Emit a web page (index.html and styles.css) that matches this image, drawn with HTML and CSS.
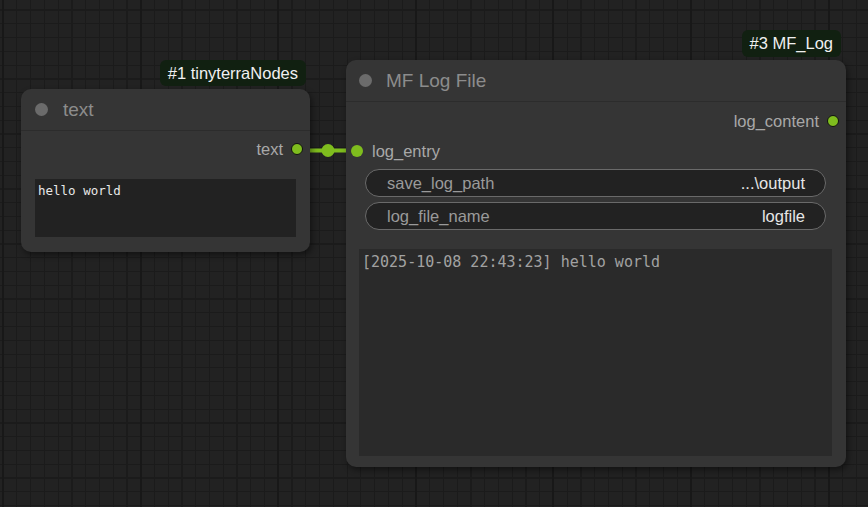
FILE: index.html
```html
<!DOCTYPE html>
<html>
<head>
<meta charset="utf-8">
<link rel="stylesheet" href="styles.css">
</head>
<body>
<div class="canvas">
  <svg class="link" width="70" height="20" viewBox="0 0 70 20">
    <line x1="6" y1="10.5" x2="56" y2="10.5" stroke="#7fbd1e" stroke-width="4"/>
    <circle cx="31" cy="10.5" r="6.5" fill="#7fbd1e"/>
  </svg>

  <div class="node node-text">
    <div class="badge">#1 tinyterraNodes</div>
    <div class="title"><span class="tdot"></span><span class="tname">text</span></div>
    <div class="body">
      <div class="slot out"><span class="slabel">text</span><span class="sdot ring"></span></div>
      <div class="textarea">hello world</div>
    </div>
  </div>

  <div class="node node-log">
    <div class="badge">#3 MF_Log</div>
    <div class="title"><span class="tdot"></span><span class="tname">MF Log File</span></div>
    <div class="body">
      <div class="slot out"><span class="slabel">log_content</span><span class="sdot ring"></span></div>
      <div class="slot in"><span class="sdot"></span><span class="slabel">log_entry</span></div>
      <div class="widgets">
        <div class="widget"><span class="wlabel">save_log_path</span><span class="wvalue">...\output</span></div>
        <div class="widget"><span class="wlabel">log_file_name</span><span class="wvalue">logfile</span></div>
      </div>
      <div class="logbox">[2025-10-08 22:43:23] hello world</div>
    </div>
  </div>
</div>
</body>
</html>
```
FILE: styles.css
```css
html, body {
  margin: 0;
  padding: 0;
}
body {
  width: 868px;
  height: 507px;
  overflow: hidden;
  background: #222222;
  font-family: "Liberation Sans", Arial, sans-serif;
}
.canvas {
  position: relative;
  width: 868px;
  height: 507px;
  background-color: #222222;
  background-image:
    repeating-linear-gradient(to right, transparent 0, transparent 2px, #181818 2px, #181818 4px, transparent 4px, transparent 137.6px),
    repeating-linear-gradient(to right, transparent 0, transparent 2.5px, #1b1b1b 2.5px, #1b1b1b 3.7px, transparent 3.7px, transparent 13.76px),
    repeating-linear-gradient(to bottom, transparent 0, transparent 9.5px, #1b1b1b 9.5px, #1b1b1b 10.7px, transparent 10.7px, transparent 13.76px);
}
.link {
  position: absolute;
  left: 297px;
  top: 140px;
}
.node {
  position: absolute;
  background: #353535;
  border-radius: 10px;
  box-shadow: 2px 3px 6px rgba(0, 0, 0, 0.45);
  display: flex;
  flex-direction: column;
}
.node-text {
  left: 21px;
  top: 89px;
  width: 289px;
  height: 163px;
}
.node-log {
  left: 346px;
  top: 60px;
  width: 500px;
  height: 407px;
}
.badge {
  position: absolute;
  right: 4px;
  bottom: calc(100% + 3px);
  height: 26px;
  line-height: 26px;
  padding: 0 8px;
  background: #112011;
  color: #f0f0f0;
  font-size: 16.5px;
  border-radius: 6px;
  white-space: nowrap;
}
.node-log .badge {
  right: 5px;
  height: 27px;
  line-height: 27px;
}
.title {
  height: 41px;
  border-bottom: 1px solid #2c2c2c;
  display: flex;
  align-items: center;
  padding-left: 14px;
  flex-shrink: 0;
}
.tdot {
  width: 13px;
  height: 13px;
  border-radius: 50%;
  background: #6b6b6b;
  flex-shrink: 0;
}
.tname {
  margin-left: 15px;
  color: #8c8c8c;
  font-size: 19px;
}
.node-log .tdot {
  margin-left: -1px;
}
.node-log .tname {
  margin-left: 14px;
}
.body {
  display: flex;
  flex-direction: column;
  flex: 1;
  padding: 6px 14px 14px 14px;
  min-height: 0;
}
.slot {
  height: 24px;
  display: flex;
  align-items: center;
  font-size: 16.5px;
  color: #a8a8a8;
}
.slot.out {
  justify-content: flex-end;
  margin-right: -7px;
}
.slot.out .slabel {
  margin-right: 8px;
}
.slot.in {
  margin-left: -8px;
  margin-top: 6px;
}
.slot.in .slabel {
  margin-left: 9px;
}
.sdot {
  width: 12px;
  height: 12px;
  border-radius: 50%;
  background: #7fbd1e;
  box-sizing: border-box;
}
.sdot.ring {
  border: 1.5px solid #111;
}
.textarea {
  margin-top: 18px;
  height: 58px;
  background: #222222;
  color: #e8e8e8;
  font-family: "DejaVu Sans Mono", "Liberation Mono", monospace;
  font-size: 12.5px;
  line-height: 16px;
  padding: 4px 3px;
  box-sizing: border-box;
}
.node-log .body {
  padding: 7px 14px 11px 13px;
}
.widgets {
  display: flex;
  flex-direction: column;
  gap: 5px;
  margin: 6px 6px 0 6px;
}
.widget {
  height: 28px;
  box-sizing: border-box;
  border: 1px solid #6a6a6a;
  border-radius: 14px;
  background: #222222;
  display: flex;
  align-items: center;
  justify-content: space-between;
  padding: 0 20px 0 21px;
  font-size: 16.5px;
}
.wlabel {
  color: #9a9a9a;
}
.wvalue {
  color: #e6e6e6;
}
.logbox {
  margin-top: 19px;
  flex: 1;
  background: #2a2a2a;
  color: #a2a2a2;
  font-family: "DejaVu Sans Mono", "Liberation Mono", monospace;
  font-size: 15px;
  line-height: 20px;
  padding: 3px 3px;
  box-sizing: border-box;
  white-space: pre;
}
```
